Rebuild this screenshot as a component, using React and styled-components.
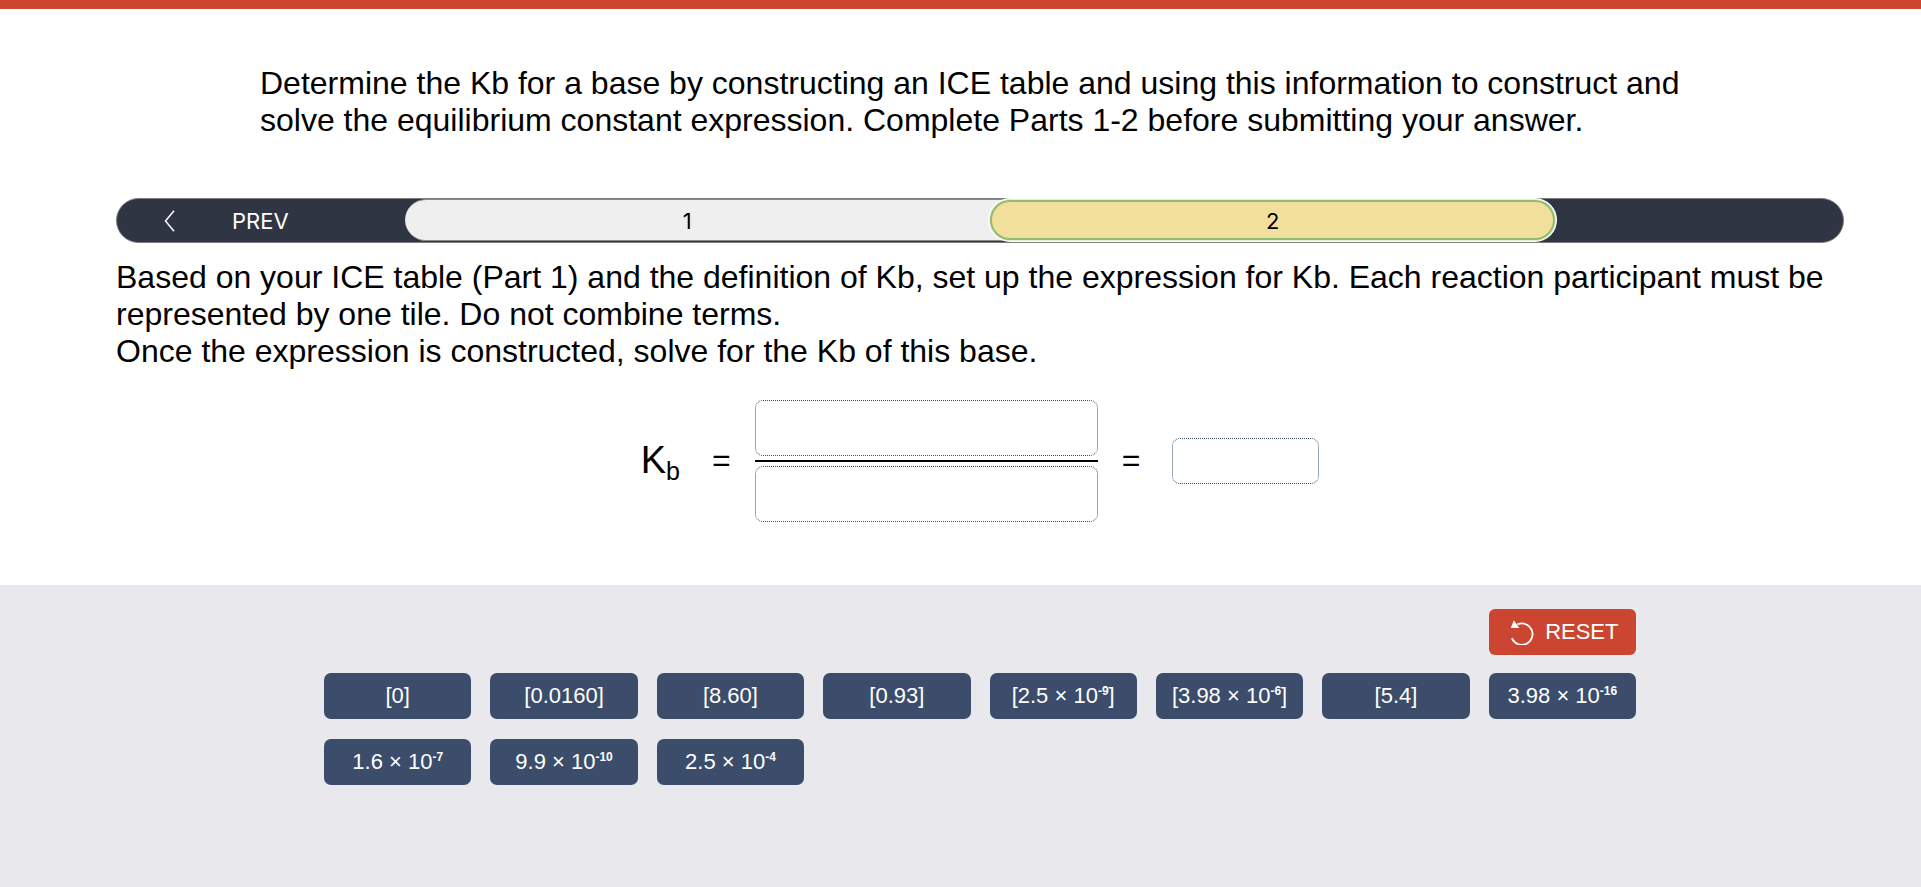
import React from "react";
import styled, { createGlobalStyle } from "styled-components";

const GlobalStyle = createGlobalStyle`
  *, *::before, *::after { box-sizing: border-box; }
  body {
    margin: 0;
    background: #ffffff;
    color: #000000;
    font-family: "Liberation Sans", Arial, sans-serif;
  }
  button {
    margin: 0;
    padding: 0;
    border: 0;
    font: inherit;
    color: inherit;
    cursor: pointer;
  }
`;

const Page = styled.div`
  display: flex;
  flex-direction: column;
  min-height: 100vh;
  border-top: 9px solid #cc4530;
`;

const Main = styled.main`
  padding: 56px 77px 63px 116px;
  font-size: 32px;
  line-height: 37px;
`;

const Intro = styled.p`
  margin: 0 144px 59px;
`;

const Instructions = styled.p`
  margin: 0 0 30px;
`;

const StepBar = styled.nav`
  display: grid;
  grid-template-columns: 1fr 4fr 1fr;
  height: 45px;
  margin-bottom: 16px;
  border: 1px solid #7d7d80;
  border-radius: 23px;
  background: #303543;
  font-family: Inter, "Liberation Sans", sans-serif;
  font-size: 22px;
  line-height: 24px;
`;

const PrevButton = styled.button`
  display: flex;
  align-items: center;
  gap: 56px;
  padding-left: 47px;
  background: transparent;
  color: #ffffff;
`;

const Steps = styled.div`
  display: grid;
  grid-template-columns: 1fr 1fr;
  gap: 20px;
  height: 42px;
  border: solid #88888a;
  border-width: 1px 0;
  border-radius: 21px;
  background: #efefef;
`;

const StepButton = styled.button`
  padding-top: 1px;
  border-radius: 20px;
  background: ${(p) => (p.$current ? "#f2df9b" : "transparent")};
  box-shadow: ${(p) =>
    p.$current
      ? "inset 0 0 0 2px #8fbd70, 0 0 0 1px #e0eed9, 0 0 0 2px #ffffff"
      : "none"};
`;

const Equation = styled.div`
  display: flex;
  justify-content: center;
  align-items: center;
`;

const Symbol = styled.span`
  padding-bottom: 2px;
  font-size: 38px;

  sub {
    font-size: 25px;
    line-height: 0;
    vertical-align: -7px;
  }
`;

const Equals = styled.span`
  margin: ${(p) => (p.$before ? "0 24px 0 32px" : "0 32px 0 24px")};
  padding-bottom: 2px;
`;

const Fraction = styled.div`
  display: flex;
  flex-direction: column;
  width: 343px;
`;

const DropZone = styled.button`
  width: ${(p) => (p.$small ? "147px" : "100%")};
  height: ${(p) => (p.$small ? "46px" : "56px")};
  border: 1px dotted #34506b;
  border-radius: 8px;
  background: #ffffff;
`;

const FractionLine = styled.div`
  height: 2px;
  margin: 4px 0;
  background: #000000;
`;

const Tray = styled.section`
  flex: 1;
  padding: 24px 285px 24px 324px;
  background: #e9e8ed;
`;

const TileGrid = styled.div`
  display: grid;
  grid-template-columns: repeat(8, 1fr);
  column-gap: 19px;
  row-gap: 20px;
`;

const ResetRow = styled(TileGrid)`
  margin-bottom: 18px;
`;

const Tile = styled.button`
  height: 46px;
  border-radius: 7px;
  background: #3b4d6b;
  color: #ffffff;
  font-size: 22px;
  white-space: nowrap;

  sup {
    font-size: 12px;
    font-weight: 700;
    line-height: 0;
    vertical-align: 8px;
  }
`;

const ResetButton = styled(Tile)`
  grid-column: 8;
  display: flex;
  justify-content: center;
  align-items: center;
  gap: 9px;
  padding-left: 4px;
  border-radius: 6px;
  background: #cc4530;
`;

const tiles = [
  { base: "[0]" },
  { base: "[0.0160]" },
  { base: "[8.60]" },
  { base: "[0.93]" },
  { base: "[2.5 × 10", exp: "-9", close: "]" },
  { base: "[3.98 × 10", exp: "-6", close: "]" },
  { base: "[5.4]" },
  { base: "3.98 × 10", exp: "-16" },
  { base: "1.6 × 10", exp: "-7" },
  { base: "9.9 × 10", exp: "-10" },
  { base: "2.5 × 10", exp: "-4" },
];

function ChevronIcon() {
  return (
    <svg width="12" height="22" viewBox="0 0 12 22" fill="none" aria-hidden="true">
      <path d="M10 0.7 L1.5 11 L10 21.3" stroke="#ffffff" strokeWidth="1.5" />
    </svg>
  );
}

function ResetIcon() {
  return (
    <svg width="26" height="26" viewBox="0 0 26 26" fill="none" aria-hidden="true">
      <path
        d="M7.5 5.4 A10.7 10.7 0 1 1 1.9 19.2"
        stroke="#ffffff"
        strokeWidth="1.8"
      />
      <path d="M3.8 1.2 L9.4 9 L0.8 9 Z" fill="#ffffff" />
    </svg>
  );
}

export default function App() {
  return (
    <Page>
      <GlobalStyle />
      <Main>
        <Intro>
          Determine the Kb for a base by constructing an ICE table and using this
          information to construct and solve the equilibrium constant expression.
          Complete Parts 1-2 before submitting your answer.
        </Intro>
        <StepBar aria-label="Parts">
          <PrevButton type="button">
            <ChevronIcon />
            PREV
          </PrevButton>
          <Steps>
            <StepButton type="button">1</StepButton>
            <StepButton type="button" $current aria-current="step">
              2
            </StepButton>
          </Steps>
        </StepBar>
        <Instructions>
          Based on your ICE table (Part 1) and the definition of Kb, set up the
          expression for Kb. Each reaction participant must be represented by one
          tile. Do not combine terms.
          <br />
          Once the expression is constructed, solve for the Kb of this base.
        </Instructions>
        <Equation>
          <Symbol>
            K<sub>b</sub>
          </Symbol>
          <Equals $before>=</Equals>
          <Fraction>
            <DropZone type="button" aria-label="Numerator" />
            <FractionLine />
            <DropZone type="button" aria-label="Denominator" />
          </Fraction>
          <Equals>=</Equals>
          <DropZone type="button" $small aria-label="Value of Kb" />
        </Equation>
      </Main>
      <Tray>
        <ResetRow>
          <ResetButton type="button">
            <ResetIcon />
            RESET
          </ResetButton>
        </ResetRow>
        <TileGrid>
          {tiles.map(({ base, exp, close }) => (
            <Tile type="button" key={base}>
              {base}
              {exp && <sup>{exp}</sup>}
              {close}
            </Tile>
          ))}
        </TileGrid>
      </Tray>
    </Page>
  );
}
